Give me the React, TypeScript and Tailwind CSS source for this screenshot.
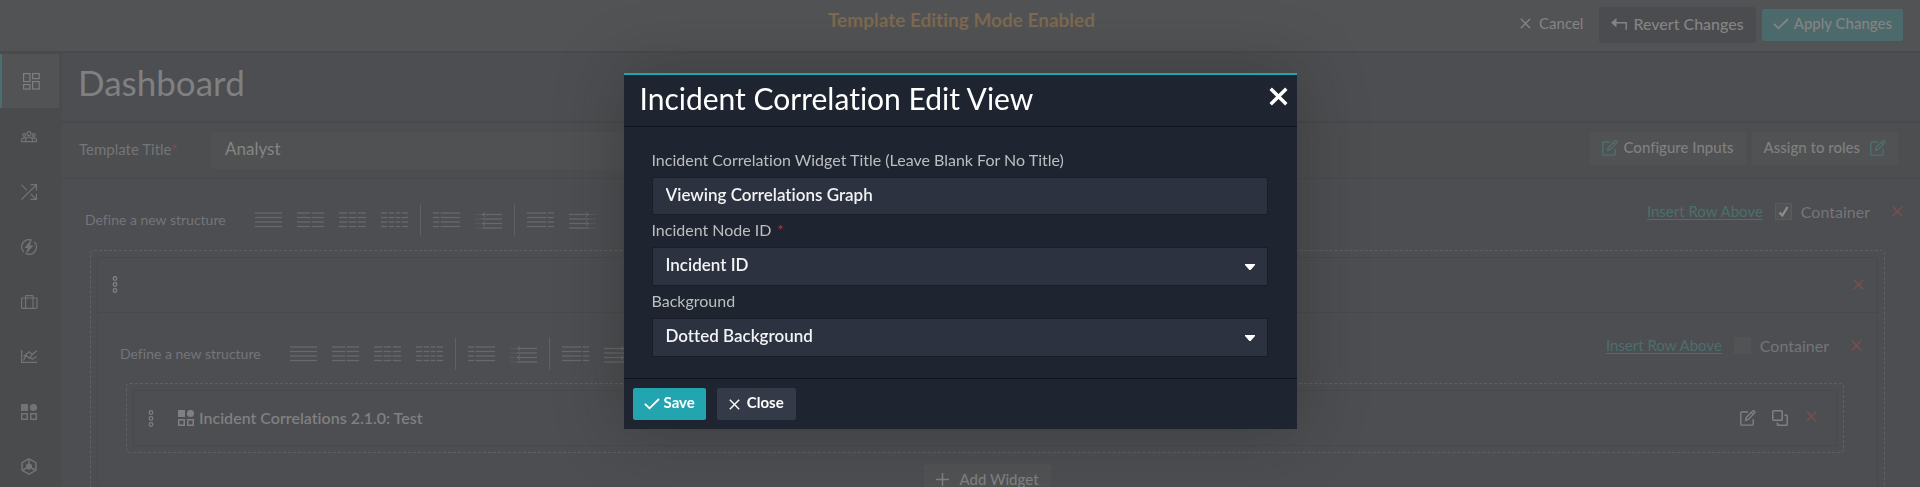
import React from "react";

type IconProps = { className?: string };

const stroke = {
  fill: "none",
  stroke: "currentColor",
  strokeWidth: 1.2,
} as const;

function DashboardIcon() {
  return (
    <svg width="17" height="17" viewBox="0 0 17 17" {...stroke}>
      <rect x="0.6" y="0.6" width="6.4" height="8" />
      <rect x="9.6" y="0.6" width="6.6" height="5" />
      <rect x="0.6" y="11.6" width="6.4" height="4.4" />
      <rect x="9.6" y="8.6" width="6.6" height="7.4" />
    </svg>
  );
}

function UsersIcon() {
  return (
    <svg width="16" height="12" viewBox="0 0 16 12" {...stroke}>
      <circle cx="8" cy="2.7" r="2" />
      <circle cx="3.2" cy="4" r="1.4" />
      <circle cx="12.8" cy="4" r="1.4" />
      <path d="M4.6 10.6V8.4C4.6 6.9 6 6.2 8 6.2s3.4.7 3.4 2.2v2.2zM4.6 10.6h-4V9c0-1.4.9-2.1 2.8-2.1H5M11.4 10.6h4V9c0-1.4-.9-2.1-2.8-2.1H11" />
    </svg>
  );
}

function ShuffleIcon() {
  return (
    <svg width="16" height="16" viewBox="0 0 16 16" {...stroke}>
      <path d="M.5 15.5L15.2.8M.5.8L6 6.3M9.8 10l5.4 5.4M9.5.6h5.9v5.9M15.4 9.7v5.7H9.5" />
    </svg>
  );
}

function BoltIcon() {
  return (
    <svg width="16" height="16" viewBox="0 0 16 16" {...stroke} strokeWidth={1.4}>
      <path d="M10.8 1.3A7.2 7.2 0 0 0 2.7 12.9M5.2 14.7A7.2 7.2 0 0 0 13.3 3.1" />
      <path d="M10.5 0L3.6 8.9h3.3L4 16l8.5-9.5H9z" fill="currentColor" stroke="none" />
    </svg>
  );
}

function CaseIcon() {
  return (
    <svg width="17" height="14" viewBox="0 0 17 14" {...stroke}>
      <rect x="0.6" y="3" width="15.4" height="10.4" rx="0.8" />
      <path d="M4.6 13.4V1.2q0-.6.6-.6h6.2q.6 0 .6.6v12.2" />
    </svg>
  );
}

function ChartIcon() {
  return (
    <svg width="16" height="13" viewBox="0 0 16 13" {...stroke} strokeWidth={1.3}>
      <path d="M.6 0v12.3H16M2.5 10.5l2.6-5.2 3.3 3 3-3.9L15.7.6M8.6 7.8l3 1.3 4-2.6" />
      <path d="M2.5 6.500L8 1.800l3.400 2.600" />
    </svg>
  );
}

function WidgetsIcon() {
  return (
    <svg width="16" height="16" viewBox="0 0 16 16" {...stroke} strokeWidth={1.5}>
      <rect x="0" y="0" width="7" height="7" fill="currentColor" stroke="none" />
      <circle cx="12.5" cy="3.5" r="3.6" fill="currentColor" stroke="none" />
      <rect x="0.75" y="9.75" width="5.5" height="5.5" />
      <rect x="9.75" y="9.75" width="5.5" height="5.5" />
    </svg>
  );
}

function HexIcon() {
  return (
    <svg width="16" height="17" viewBox="0 0 16 17" {...stroke} strokeWidth={1.5}>
      <path d="M8 .9l6.9 3.8v7.6L8 16.1l-6.900-3.800V4.700z" />
      <path d="M8 5l3 1.8v3.4L8 12l-3-1.800V6.800z" fill="currentColor" stroke="none" />
      <path d="M8 1v5M2 12l3.5-2M14 12l-3.5-2" />
    </svg>
  );
}

function CrossIcon({ className }: IconProps) {
  return (
    <svg width="11" height="11" viewBox="0 0 11 11" className={className} {...stroke} strokeWidth={1.4}>
      <path d="M.8.8l9.4 9.4M10.2.8L.8 10.2" />
    </svg>
  );
}

function CheckIcon() {
  return (
    <svg width="16" height="12" viewBox="0 0 16 12" {...stroke} strokeWidth={1.8}>
      <path d="M.9 5.8l4.6 4.5L15 1" />
    </svg>
  );
}

function RevertIcon() {
  return (
    <svg width="17" height="12" viewBox="0 0 17 12" {...stroke} strokeWidth={1.5}>
      <path d="M3 4.800h12.200v7" />
      <path d="M5.500 0v9.600L0 4.800z" fill="currentColor" stroke="none" />
    </svg>
  );
}

function EditIcon({ className }: IconProps) {
  return (
    <svg width="16" height="16" viewBox="0 0 16 16" className={className} {...stroke} strokeWidth={1.4}>
      <path d="M8 2H1.700q-.9 0-.9.9v11.300q0 .9.900.9h10.600q.9 0 .9-.9V9" />
      <path d="M5.600 10.400l.7-3 6.400-6.400q.7-.6 1.400 0l.5.5q.6.7 0 1.400L8.300 9.400zM11.300 2.600l1.800 1.800" />
    </svg>
  );
}

function CopyIcon() {
  return (
    <svg width="16" height="16" viewBox="0 0 16 16" {...stroke} strokeWidth={1.5}>
      <rect x="0.8" y="0.8" width="9.4" height="9.4" rx="0.8" />
      <path d="M12.400 5.200h2q.8 0 .8.8v8.400q0 .8-.8.8H6.200q-.8 0-.8-.8v-2" />
    </svg>
  );
}

function DragIcon() {
  return (
    <svg width="6" height="17" viewBox="0 0 6 17" {...stroke}>
      <circle cx="3" cy="2.5" r="1.8" />
      <circle cx="3" cy="8.5" r="1.8" />
      <circle cx="3" cy="14.5" r="1.8" />
    </svg>
  );
}

function PlusIcon() {
  return (
    <svg width="13" height="13" viewBox="0 0 13 13" {...stroke} strokeWidth={1.5}>
      <path d="M6.5 0v13M0 6.5h13" />
    </svg>
  );
}

type StructureProps = { label: string; cuts?: number[]; arrow?: "left" | "right" };

function StructureButton({ label, cuts = [], arrow }: StructureProps) {
  const edges = [0, ...cuts, 27];
  const rows = arrow ? [3.5, 8, 12.5, 17] : [2, 6.5, 11, 15.5];
  return (
    <button type="button" aria-label={label} className="block text-[#68696b]">
      <svg width="27" height="18" viewBox="0 0 27 18" fill="none" stroke="currentColor">
        {rows.map((y) =>
          edges.slice(0, -1).map((start, i) => {
            const faded = (arrow === "left" && i === 0) || (arrow === "right" && i === 1);
            return (
              <path
                key={`${y}-${i}`}
                opacity={faded ? 0.4 : 1}
                strokeWidth="1.3"
                d={`M${start + (i > 0 && !arrow ? 0.7 : 0)} ${y}H${edges[i + 1] - (i < edges.length - 2 && !arrow ? 0.7 : 0)}`}
              />
            );
          }),
        )}
        {arrow === "left" && <path d="M10 1L7.5 3.5L10 6M10 10L7.5 12.5L10 15" />}
        {arrow === "right" && <path d="M17 1l2.5 2.5L17 6M17 10l2.5 2.5L17 15" />}
      </svg>
    </button>
  );
}

function StructureBar() {
  return (
    <div className="flex items-center">
      <span className="w-[170px] text-sm text-[#74757a]">Define a new structure</span>
      <div className="flex items-center gap-3">
        <div className="flex gap-[15px]">
          <StructureButton label="One column" />
          <StructureButton label="Two columns" cuts={[14]} />
          <StructureButton label="Three columns" cuts={[9, 18]} />
          <StructureButton label="Four columns" cuts={[7, 14, 20]} />
        </div>
        <span className="h-8 w-px bg-[#5f6062]" />
        <div className="flex gap-[15px]">
          <StructureButton label="Narrow left column" cuts={[7]} />
          <StructureButton label="Collapsible left column" cuts={[7]} arrow="left" />
        </div>
        <span className="h-8 w-px bg-[#5f6062]" />
        <div className="flex gap-[15px]">
          <StructureButton label="Narrow right column" cuts={[20]} />
          <StructureButton label="Collapsible right column" cuts={[20]} arrow="right" />
        </div>
      </div>
    </div>
  );
}

function RowActions({ checked }: { checked: boolean }) {
  return (
    <div className="flex items-center">
      <a href="#insert" className="text-[15px] text-[#4c6e6d] underline underline-offset-2">
        Insert Row Above
      </a>
      <label className="ml-3 flex items-center gap-[9px] text-base text-[#747579]">
        <span className="grid">
          <input
            type="checkbox"
            defaultChecked={checked}
            className="peer col-start-1 row-start-1 size-[17px] appearance-none bg-[#525354] checked:border checked:border-[#5a5b5c]"
          />
          <svg
            viewBox="0 0 17 17"
            className="pointer-events-none col-start-1 row-start-1 hidden size-[17px] text-[#8d8e8f] peer-checked:block"
            fill="none"
            stroke="currentColor"
            strokeWidth="2.2"
          >
            <path d="M4.5 9.5l2.8 3L12.5 4" />
          </svg>
        </span>
        Container
      </label>
      <button type="button" aria-label="Remove row" className="ml-[22px] text-[#7c4e50]">
        <CrossIcon />
      </button>
    </div>
  );
}

const navItems = [
  { label: "Dashboard", Icon: DashboardIcon },
  { label: "Users", Icon: UsersIcon },
  { label: "Correlations", Icon: ShuffleIcon },
  { label: "Actions", Icon: BoltIcon },
  { label: "Cases", Icon: CaseIcon },
  { label: "Reports", Icon: ChartIcon },
  { label: "Widgets", Icon: WidgetsIcon },
  { label: "Integrations", Icon: HexIcon },
];

function Sidebar() {
  return (
    <nav className="w-[62px] shrink-0 bg-[#4a4b4c] pt-px text-[#727376]">
      {navItems.map(({ label, Icon }, i) => (
        <a
          key={label}
          href={`#${label.toLowerCase()}`}
          aria-label={label}
          className={
            i === 0
              ? "mb-px flex h-[54px] w-[59px] items-center justify-center border-l-2 border-[#4b6f70] bg-[#525354] pl-px text-[#7e7f80]"
              : "flex h-[55px] w-[58px] items-center justify-center"
          }
        >
          <Icon />
        </a>
      ))}
    </nav>
  );
}

function TopBar() {
  return (
    <header className="grid h-[53px] shrink-0 grid-cols-[1fr_auto_1fr] border-b-2 border-[#48494a] bg-[#525354] pr-[17px]">
      <span />
      <p className="pt-2 pl-5 text-[19px] leading-6 font-bold text-[#7d6a50]">Template Editing Mode Enabled</p>
      <div className="flex items-center justify-end pb-[2px] text-[#848484]">
        <button type="button" className="mr-4 flex items-center gap-2 pb-[2px] text-[15px]">
          <CrossIcon />
          Cancel
        </button>
        <button
          type="button"
          className="mr-[6px] flex h-9 items-center gap-[5px] rounded-[3px] bg-[#4b4c4f] px-3 pb-[2px] text-base font-medium"
        >
          <RevertIcon />
          Revert Changes
        </button>
        <button
          type="button"
          className="flex h-8 items-center gap-[5px] rounded-[2px] bg-[#4c696b] px-[11px] pb-[2px] text-[15px] font-medium"
        >
          <CheckIcon />
          Apply Changes
        </button>
      </div>
    </header>
  );
}

function TemplateRow() {
  return (
    <div className="flex h-14 items-center border-b border-[#48494b] bg-[#4d4e50] pr-[22px] pl-[17px]">
      <label htmlFor="template-title" className="w-[132px] shrink-0 pb-[2px] text-[15px] text-[#747579]">
        Template Title<span className="text-[#7c4e50]">*</span>
      </label>
      <input
        id="template-title"
        defaultValue="Analyst"
        className="h-[37px] w-[480px] bg-[#505152] px-[14px] pb-1 text-[17px] text-[#858585] outline-none"
      />
      <div className="ml-auto flex gap-[6px] pb-1 text-[15px] font-medium text-[#7f8081]">
        <button
          type="button"
          className="flex h-[33px] items-center gap-[6px] rounded-[2px] bg-[#515253] px-3 pb-[2px]"
        >
          <EditIcon className="text-[#4c706f]" />
          Configure Inputs
        </button>
        <button
          type="button"
          className="flex h-[33px] items-center gap-[10px] rounded-[2px] bg-[#515253] px-3 pb-[2px]"
        >
          Assign to roles
          <EditIcon className="text-[#4c706f]" />
        </button>
      </div>
    </div>
  );
}

function WidgetRow() {
  return (
    <div className="rounded border border-dashed border-[#5f6061] p-[6px]">
      <div className="flex h-14 items-center border border-[#48494b] pr-[19px] pl-[14px] text-[#7f8081]">
        <DragIcon />
        <span className="ml-6">
          <WidgetsIcon />
        </span>
        <span className="ml-[5px] text-base font-semibold">Incident Correlations 2.1.0: Test</span>
        <div className="ml-auto flex items-center">
          <button type="button" aria-label="Edit widget">
            <EditIcon />
          </button>
          <button type="button" aria-label="Duplicate widget" className="ml-4">
            <CopyIcon />
          </button>
          <button type="button" aria-label="Remove widget" className="mb-1 ml-[18px] text-[#7c4e50]">
            <CrossIcon />
          </button>
        </div>
      </div>
    </div>
  );
}

function Editor() {
  return (
    <div className="pt-[10px]">
      <div className="flex h-[61px] items-center justify-between pr-[17px] pl-[23px]">
        <StructureBar />
        <div className="pb-4">
          <RowActions checked />
        </div>
      </div>
      <div className="mr-[35px] ml-7 rounded border border-dashed border-[#5f6061] p-[6px]">
        <div className="border border-[#48494b]">
          <div className="flex h-[55px] items-center justify-between border-b border-[#48494b] pr-[13px] pb-px pl-[14px] text-[#848484]">
            <DragIcon />
            <button type="button" aria-label="Remove container" className="text-[#7c4e50]">
              <CrossIcon />
            </button>
          </div>
          <div className="flex h-[70px] items-center justify-between pt-[11px] pr-[15px] pl-[22px]">
            <StructureBar />
            <div className="pb-4">
              <RowActions checked={false} />
            </div>
          </div>
          <div className="mr-[33px] ml-7">
            <WidgetRow />
          </div>
          <div className="flex justify-center py-[11px]">
            <button
              type="button"
              className="flex h-8 items-center gap-[10px] rounded-[2px] bg-[#515253] px-3 pb-[2px] text-[15px] font-medium text-[#7f8081]"
            >
              <PlusIcon />
              Add Widget
            </button>
          </div>
        </div>
      </div>
    </div>
  );
}

type SelectFieldProps = { id: string; label: string; required?: boolean; options: string[] };

function SelectField({ id, label, required, options }: SelectFieldProps) {
  return (
    <div>
      <label htmlFor={id} className="flex h-8 items-center pb-[2px] text-base text-[#bdbebf]">
        {label}
        {required && <span className="ml-[6px] text-sm text-[#c03540]">*</span>}
      </label>
      <div className="grid items-center">
        <select
          id={id}
          className="col-start-1 row-start-1 h-[39px] w-full appearance-none border border-[#191e29] bg-[#2c323f] px-[13px] pb-[3px] text-[17px] font-semibold text-[#f2f3f4] outline-none"
        >
          {options.map((option) => (
            <option key={option}>{option}</option>
          ))}
        </select>
        <svg
          width="10"
          height="6"
          viewBox="0 0 10 6"
          className="pointer-events-none col-start-1 row-start-1 mr-[13px] justify-self-end text-white"
        >
          <path d="M0 0h10v1L5.600 6H4.400L0 1z" fill="currentColor" />
        </svg>
      </div>
    </div>
  );
}

function EditViewDialog() {
  return (
    <div
      role="dialog"
      aria-modal="true"
      aria-labelledby="dialog-title"
      className="w-[673px] max-w-full border-t-2 border-[#22a5af] bg-[#1e2430] shadow-[0_0_60px_rgba(30,30,30,0.35)]"
    >
      <div className="flex h-[52px] justify-between border-b border-[#0f131a] pr-[9px] pl-4">
        <h2 id="dialog-title" className="pt-[5px] text-3xl leading-9 text-white">
          Incident Correlation Edit View
        </h2>
        <button type="button" aria-label="Close dialog" className="mt-3 self-start text-white">
          <svg width="19" height="19" viewBox="0 0 19 19" fill="none" stroke="currentColor" strokeWidth="3.4">
            <path d="M1.7 1.7l15.6 15.6M17.3 1.7L1.7 17.3" />
          </svg>
        </button>
      </div>
      <div className="pt-[18px] pr-[29px] pb-[21px] pl-7">
        <label htmlFor="widget-title" className="flex h-8 items-center pb-[2px] text-base text-[#bdbebf]">
          Incident Correlation Widget Title (Leave Blank For No Title)
        </label>
        <input
          id="widget-title"
          defaultValue="Viewing Correlations Graph"
          className="block h-[38px] w-full border border-[#191e29] bg-[#2c323f] px-[13px] pb-1 text-[17px] font-semibold text-[#f2f3f4] outline-none"
        />
        <SelectField id="node-id" label="Incident Node ID" required options={["Incident ID"]} />
        <SelectField id="background" label="Background" options={["Dotted Background"]} />
      </div>
      <div className="flex gap-[11px] border-t border-[#0f131a] px-[9px] py-[9px] text-[15px] font-bold text-white">
        <button type="button" className="flex h-8 items-center gap-1 rounded-[2px] bg-[#22a5af] px-[11px]">
          <CheckIcon />
          <span className="pb-1">Save</span>
        </button>
        <button type="button" className="flex h-8 items-center gap-[7px] rounded-[2px] bg-[#343a47] px-3">
          <CrossIcon />
          <span className="pb-1">Close</span>
        </button>
      </div>
    </div>
  );
}

export default function App() {
  return (
    <div className="flex h-screen flex-col overflow-hidden bg-[#4d4e51] font-['Lato',sans-serif] [font-variant-ligatures:none]">
      <TopBar />
      <div className="flex min-h-0 flex-1">
        <Sidebar />
        <main className="min-w-0 flex-1 overflow-hidden">
          <h1 className="h-[70px] border-b-2 border-[#48494b] pt-[7px] pl-4 text-[35px] leading-[44px] text-[#7f8081]">
            Dashboard
          </h1>
          <TemplateRow />
          <Editor />
        </main>
      </div>
      <div className="fixed inset-0 flex items-start justify-center pt-[73px]">
        <EditViewDialog />
      </div>
    </div>
  );
}
